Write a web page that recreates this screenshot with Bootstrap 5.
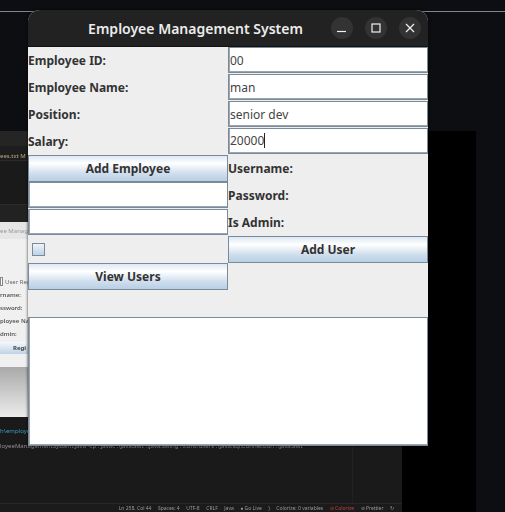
<!DOCTYPE html>
<html lang="en">

<head>
    <meta charset="UTF-8" />
    <title>Employee Management System</title>
    <link rel="stylesheet" href="https://cdn.jsdelivr.net/npm/bootstrap@5.3.2/dist/css/bootstrap.min.css" />
    <style>
        body {
            background: #0c0e12;
            overflow: hidden;
        }

        .desk {
            width: 505px;
            height: 512px;
            overflow: hidden;
            font-family: "Noto Sans", sans-serif;
        }

        .top-line {
            left: 0;
            right: 0;
            top: 11px;
            height: 1px;
            background: #7f8590;
        }

        .black-block {
            left: 402px;
            top: 131px;
            width: 74px;
            height: 381px;
            background: #000;
        }

        /* the blurred editor behind the app window */
        .code-win {
            left: 0;
            top: 131px;
            width: 402px;
            height: 381px;
            background: #1a1a1a;
            filter: blur(.7px);
            font-size: 6px;
            line-height: 12px;
        }

        .code-head {
            height: 15px;
            background: #252525;
        }

        .code-tabs {
            height: 15px;
            background: #1d1d1d;
            border-bottom: 1px solid #2b2b2b;
            color: #b9a878;
            line-height: 20px;
        }

        .code-gap {
            height: 44px;
            border-bottom: 1px solid #2a2a2a;
        }

        .code-gap2 {
            height: 17px;
            background: #222;
        }

        .shot-win {
            height: 145px;
            background: #f0f0f0;
            color: #444;
            white-space: nowrap;
            overflow: hidden;
        }

        .shot-title {
            height: 17px;
            background: #e6e6e6;
            color: #999;
            padding-top: 3px;
        }

        .shot-tab {
            margin-top: 35px;
            height: 15px;
            color: #666;
        }

        .shot-box {
            width: 3px;
            height: 9px;
            border: 1px solid #888;
            background: #fff;
            margin-right: 2px;
        }

        .shot-lbl {
            height: 13px;
            font-weight: 600;
            color: #555;
        }

        .shot-btn {
            height: 12px;
            margin-top: 1px;
            padding-left: 13px;
            background: linear-gradient(#f4f8fb, #bfd2e6);
            font-weight: 700;
            color: #444;
        }

        .shot-fade {
            height: 50px;
            background: linear-gradient(#a9a9a9, #ececec);
        }

        .term-path {
            color: #3f9cc0;
            height: 15px;
            margin-top: 8px;
            white-space: nowrap;
        }

        .term-cmd {
            color: #8f8f8f;
            white-space: nowrap;
        }

        .term-split {
            left: 352px;
            top: 315px;
            bottom: 9px;
            width: 1px;
            background: #222;
        }

        .code-status {
            left: 0;
            right: 0;
            bottom: 0;
            height: 9px;
            padding-right: 8px;
            border-top: 1px solid #272727;
            background: #1b1b1b;
            color: #9a9a9a;
            font-size: 5px;
            line-height: 8px;
            gap: 6.5px;
        }

        .status-red {
            color: #c9403c;
        }

        /* app window */
        .app-win {
            left: 28px;
            top: 10px;
            width: 400px;
            height: 436px;
            background: #eee;
            border-radius: 12px 12px 0 0;
            box-shadow: 0 0 3px rgba(0, 0, 0, .8);
        }

        .app-bar {
            height: 37px;
            background: #222;
            border-radius: 12px 12px 0 0;
            border-bottom: 1px solid #111;
            padding-right: 7px;
        }

        .app-title {
            font-weight: 600;
            font-size: 14px;
            color: #ececec;
            padding-left: 44px;
        }

        .bar-btn {
            width: 22px;
            height: 22px;
            padding: 0;
            border: 0;
            background: #333;
            margin-left: 12px;
        }

        .app-grid {
            display: grid;
            grid-template-columns: 200px 200px;
            grid-template-rows: repeat(10, 27px) 129px;
            background: #eee;
        }

        .app-lbl {
            font-size: 12px;
            font-weight: 700;
            color: #333;
            line-height: 27px;
        }

        .app-field {
            height: 26px;
            margin: 0 1px 1px 0;
            padding: 0 1px;
            font-family: "Noto Sans", sans-serif;
            font-size: 12px;
            line-height: 24px;
            color: #444;
            border: 1px solid #7a8a99;
            border-radius: 0;
            background: #fff;
            box-shadow: inset 1px 0 0 #9aa7b3, inset 0 -1px 0 #9aa7b3;
        }

        .app-caret {
            display: inline-block;
            width: 1px;
            height: 15px;
            background: #222;
            vertical-align: -3px;
        }

        .app-btn {
            height: 27px;
            padding: 0;
            font-size: 12px;
            font-weight: 700;
            font-family: "Noto Sans", sans-serif;
            color: #333;
            border: 1px solid #7a8a99;
            border-radius: 0;
            background: linear-gradient(#dde8f3, #fff 30%, #cfdeed 70%, #b8cfe5);
        }

        .form-check-input[type=checkbox].app-check {
            width: 13px;
            height: 13px;
            margin: 0 0 0 4px;
            border: 1px solid #7a8a99;
            border-radius: 0;
            background: linear-gradient(#eef3f8, #bfd2e6);
        }

        .app-area {
            grid-column: 1 / span 2;
            height: 129px;
            resize: none;
            border: 1px solid #7a8a99;
            border-radius: 0;
            background: #fff;
            box-shadow: inset 1px 0 0 #9aa7b3, inset 0 -1px 0 #9aa7b3;
        }
    </style>
</head>

<body>
    <div class="desk position-relative">
        <div class="top-line position-absolute"></div>
        <div class="black-block position-absolute"></div>

        <div class="code-win position-absolute">
            <div class="code-head"></div>
            <div class="code-tabs">ees.txt M</div>
            <div class="code-gap"></div>
            <div class="code-gap2"></div>
            <div class="shot-win">
                <div class="shot-title">ee Manag</div>
                <div class="shot-tab d-flex align-items-center"><span class="shot-box"></span>User Reg</div>
                <div class="shot-lbl">rname:</div>
                <div class="shot-lbl">ssword:</div>
                <div class="shot-lbl">ployee Na</div>
                <div class="shot-lbl">dmin:</div>
                <div class="shot-btn">Regi</div>
            </div>
            <div class="shot-fade"></div>
            <div class="term-path">h\employe</div>
            <div class="term-cmd">loyeeManagementSystem.java -cp . javac .\java.awt .\java.swing .\controllers .\java.sql.Connection .\java.awt</div>
            <div class="term-split position-absolute"></div>
            <div class="code-status position-absolute d-flex justify-content-end align-items-center">
                <span>Ln 258, Col 44</span>
                <span>Spaces: 4</span>
                <span>UTF-8</span>
                <span>CRLF</span>
                <span>Java</span>
                <span>● Go Live</span>
                <span>)</span>
                <span>Colorize: 0 variables</span>
                <span class="status-red">⊘ Colorize</span>
                <span>⊘ Prettier</span>
                <span>↻</span>
            </div>
        </div>

        <div class="app-win position-absolute">
            <div class="app-bar d-flex align-items-center">
                <div class="app-title flex-grow-1 text-center">Employee Management System</div>
                <button class="bar-btn rounded-circle d-flex align-items-center justify-content-center" aria-label="Minimize">
                    <svg width="10" height="10" viewBox="0 0 10 10"><path d="M0 8.5H9" stroke="#f0f0f0" stroke-width="1.2" fill="none" /></svg>
                </button>
                <button class="bar-btn rounded-circle d-flex align-items-center justify-content-center" aria-label="Maximize">
                    <svg width="10" height="10" viewBox="0 0 10 10"><rect x="1" y="1" width="8" height="8" stroke="#f0f0f0" stroke-width="1.2" fill="none" /></svg>
                </button>
                <button class="bar-btn rounded-circle d-flex align-items-center justify-content-center" aria-label="Close">
                    <svg width="10" height="10" viewBox="0 0 10 10"><path d="M1 1L9 9M9 1L1 9" stroke="#f0f0f0" stroke-width="1.2" fill="none" /></svg>
                </button>
            </div>

            <div class="app-grid">
                <label class="app-lbl">Employee ID:</label>
                <input class="form-control app-field" value="00" />

                <label class="app-lbl">Employee Name:</label>
                <input class="form-control app-field" value="man" />

                <label class="app-lbl">Position:</label>
                <input class="form-control app-field" value="senior dev" />

                <label class="app-lbl">Salary:</label>
                <div class="form-control app-field">20000<span class="app-caret"></span></div>

                <button class="btn app-btn">Add Employee</button>
                <label class="app-lbl">Username:</label>

                <input class="form-control app-field" />
                <label class="app-lbl">Password:</label>

                <input class="form-control app-field" />
                <label class="app-lbl">Is Admin:</label>

                <div class="d-flex align-items-center"><input type="checkbox" class="form-check-input app-check" /></div>
                <button class="btn app-btn">Add User</button>

                <button class="btn app-btn">View Users</button>
                <div></div>

                <div></div>
                <div></div>

                <textarea class="form-control app-area"></textarea>
            </div>
        </div>
    </div>

    <script src="https://cdn.jsdelivr.net/npm/bootstrap@5.3.2/dist/js/bootstrap.bundle.min.js"></script>
</body>

</html>
